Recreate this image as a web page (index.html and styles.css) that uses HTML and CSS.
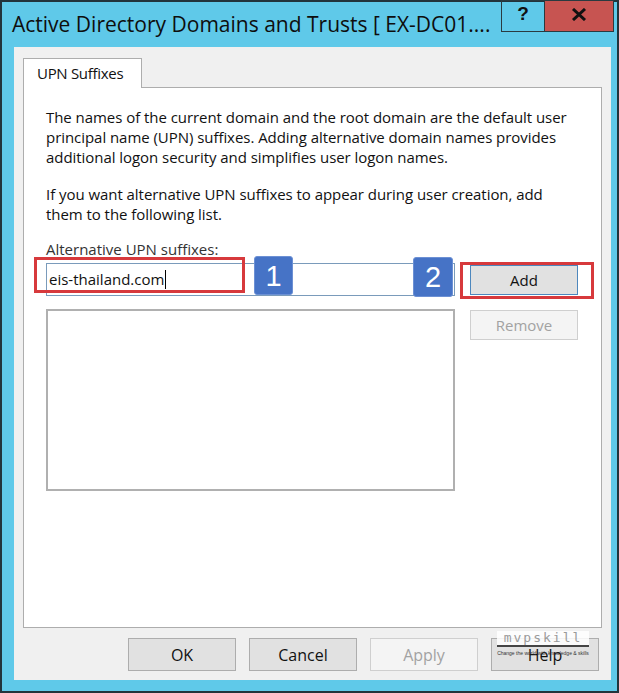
FILE: index.html
```html
<!DOCTYPE html>
<html lang="en">
  <head>
    <meta charset="UTF-8" />
    <title>Active Directory Domains and Trusts</title>
    <link rel="stylesheet" href="styles.css">
  </head>
  <body>
    <div class="window">
      <div class="titlebar">
        <div class="title">Active Directory Domains and Trusts [ EX-DC01....</div>
        <div class="caption-btns">
          <div class="cap help">?</div>
          <div class="cap close">
            <svg width="16" height="13" viewBox="0 0 16 13">
              <path d="M2 1 L14 12 M14 1 L2 12" stroke="#111" stroke-width="3" fill="none" />
            </svg>
          </div>
        </div>
      </div>

      <div class="client">
        <div class="tabs">
          <div class="tab">UPN Suffixes</div>
        </div>
        <div class="panel">
          <p class="intro">
            The names of the current domain and the root domain are the default user<br />
            principal name (UPN) suffixes. Adding alternative domain names provides<br />
            additional logon security and simplifies user logon names.
          </p>
          <p class="intro second">
            If you want alternative UPN suffixes to appear during user creation, add<br />
            them to the following list.
          </p>
          <div class="label">Alternative UPN suffixes:</div>
          <div class="editor">
            <div class="left-col">
              <div class="input">eis-thailand.com<span class="caret"></span></div>
              <div class="list"></div>
            </div>
            <div class="right-col">
              <button class="btn default">Add</button>
              <button class="btn" disabled>Remove</button>
            </div>
          </div>

          <!--annotations drawn over the dialog-->
          <div class="mark mark-1"></div>
          <div class="mark mark-2"></div>
          <div class="badge badge-1">1</div>
          <div class="badge badge-2">2</div>
        </div>

        <div class="footer">
          <button class="btn wide">OK</button>
          <button class="btn wide">Cancel</button>
          <button class="btn wide" disabled>Apply</button>
          <button class="btn wide help-btn">Help
            <span class="watermark">
              <span class="wm-name">mvpskill</span>
              <span class="wm-tag">Change the world with knowledge &amp; skills</span>
            </span>
          </button>
        </div>
      </div>
    </div>
  </body>
</html>
```

FILE: styles.css
```css
body {
  margin: 0;
  padding: 0;
  background: #1f3640;
}
.window {
  width: 619px;
  height: 693px;
  box-sizing: border-box;
  border: 2px solid #22343c;
  background: #5fc9e9;
  display: flex;
  flex-direction: column;
  font-family: "Open Sans", "Noto Sans", sans-serif;
  color: #111;
}
.titlebar {
  height: 45px;
  display: flex;
  justify-content: space-between;
  align-items: flex-start;
  flex-shrink: 0;
}
.title {
  font-size: 21px;
  line-height: 24px;
  padding: 10px 0 0 10px;
  white-space: nowrap;
  color: #0e0e0e;
}
.caption-btns {
  display: flex;
  margin-top: -2px;
  margin-right: 3px;
}
.cap {
  height: 32px;
  box-sizing: border-box;
  border: 1px solid #2a3a40;
  display: flex;
  align-items: center;
  justify-content: center;
}
.help {
  width: 43px;
  border-right: none;
  font-family: "Liberation Sans", sans-serif;
  font-weight: 700;
  font-size: 19px;
  padding-bottom: 4px;
}
.close {
  width: 70px;
  background: #c75451;
  padding-bottom: 4px;
}
.client {
  flex: 1;
  margin: 0 6px 11px 12px;
  background: #f0f0f0;
  padding: 11px 9px 9px 9px;
  display: flex;
  flex-direction: column;
}
.tabs {
  display: flex;
  position: relative;
  z-index: 1;
}
.tab {
  width: 119px;
  height: 30px;
  box-sizing: border-box;
  border: 1px solid #adadad;
  border-bottom: none;
  background: #fff;
  font-size: 15px;
  line-height: 28px;
  padding-left: 13px;
  letter-spacing: -0.3px;
}
.panel {
  position: relative;
  height: 541px;
  box-sizing: border-box;
  margin-top: -1px;
  border: 1px solid #adadad;
  background: #fff;
  padding: 19px 22px 0 22px;
}
.intro {
  margin: 0;
  font-size: 15px;
  line-height: 20px;
  white-space: nowrap;
  letter-spacing: -0.05px;
}
.intro.second {
  margin-top: 17px;
}
.label {
  margin-top: 15px;
  font-size: 15px;
  line-height: 20px;
  color: #333;
}
.editor {
  display: flex;
  gap: 15px;
  margin-top: 4px;
}
.left-col {
  width: 409px;
  display: flex;
  flex-direction: column;
  gap: 13px;
}
.input {
  height: 33px;
  box-sizing: border-box;
  border: 1px solid #7a9bbb;
  font-size: 15px;
  line-height: 31px;
  padding-left: 2px;
  display: flex;
  align-items: center;
}
.caret {
  display: inline-block;
  width: 1px;
  height: 19px;
  background: #000;
  margin-left: 1px;
}
.list {
  height: 182px;
  box-sizing: border-box;
  border: 2px solid #b0b0b0;
}
.right-col {
  display: flex;
  flex-direction: column;
  gap: 15px;
  padding-top: 2px;
}
.btn {
  width: 108px;
  height: 30px;
  box-sizing: border-box;
  border: 1px solid #adadad;
  background: #e1e1e1;
  font-family: "Open Sans", "Noto Sans", sans-serif;
  font-size: 15px;
  color: #111;
  padding: 0;
}
.btn.default {
  border-color: #4d87bd;
}
.btn:disabled {
  background: #f4f4f4;
  border-color: #cfcfcf;
  color: #a2a2a2;
}
.footer {
  display: flex;
  justify-content: flex-end;
  gap: 13px;
  margin-top: 10px;
  padding-right: 3px;
}
.btn.wide {
  height: 33px;
  font-size: 16px;
}
.help-btn {
  position: relative;
}
.watermark {
  position: absolute;
  left: 5px;
  top: -8px;
  width: 92px;
  display: flex;
  flex-direction: column;
  align-items: center;
}
.wm-name {
  background: rgba(255, 255, 255, 0.85);
  width: 100%;
  font-family: "DejaVu Sans Mono", monospace;
  font-size: 13px;
  line-height: 14px;
  letter-spacing: 2px;
  color: #9a9a9a;
  text-align: center;
  border-bottom: 2px solid #444;
}
.wm-tag {
  font-family: "Liberation Sans", sans-serif;
  font-size: 5px;
  line-height: 8px;
  color: #333;
  white-space: nowrap;
  margin-top: 2px;
}
.mark {
  position: absolute;
  border: 3px solid #d7393c;
  box-sizing: border-box;
}
.mark-1 {
  left: 10px;
  top: 169px;
  width: 211px;
  height: 36px;
}
.mark-2 {
  left: 436px;
  top: 174px;
  width: 134px;
  height: 37px;
}
.badge {
  position: absolute;
  width: 40px;
  height: 40px;
  box-sizing: border-box;
  background: #4673c6;
  border: 1px solid #6c90d4;
  border-radius: 3px;
  color: #fff;
  font-family: "Liberation Sans", sans-serif;
  font-size: 29px;
  line-height: 38px;
  text-align: center;
}
.badge-1 {
  left: 230px;
  top: 168px;
  width: 39px;
  height: 39px;
}
.badge-2 {
  left: 389px;
  top: 169px;
}
```
